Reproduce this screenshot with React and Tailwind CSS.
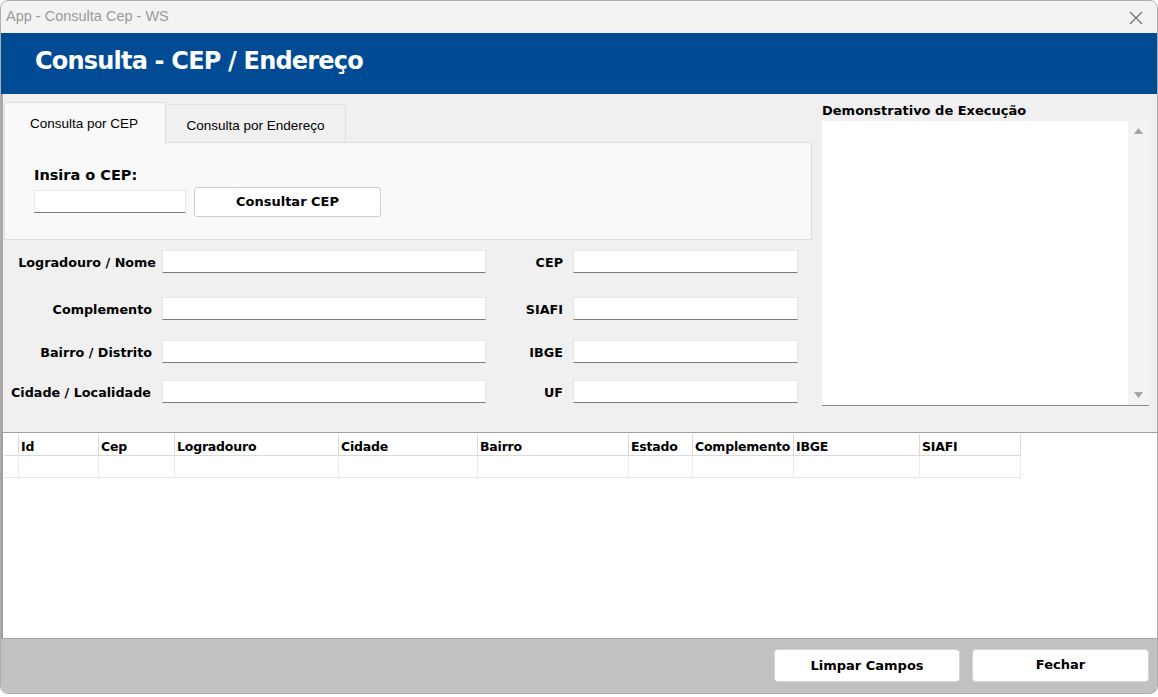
import React from "react";

const bold = "font-['DejaVu_Sans',sans-serif] font-bold";

const Field = ({ className = "" }) => (
  <div className={`h-[23px] bg-white border border-[#e6e6e6] border-b-[#7a7a7a] ${className}`} />
);

const columns = [
  { name: "", w: 15 },
  { name: "Id", w: 80 },
  { name: "Cep", w: 76 },
  { name: "Logradouro", w: 164 },
  { name: "Cidade", w: 139 },
  { name: "Bairro", w: 151 },
  { name: "Estado", w: 64 },
  { name: "Complemento", w: 101 },
  { name: "IBGE", w: 126 },
  { name: "SIAFI", w: 101 },
];

const rows = [
  { left: "Logradouro / Nome", right: "CEP", mt: "mt-[10px]", lp: "pr-[6px]" },
  { left: "Complemento", right: "SIAFI", mt: "mt-[24px]", lp: "pr-[10px]" },
  { left: "Bairro / Distrito", right: "IBGE", mt: "mt-[20px]", lp: "pr-[10px]" },
  { left: "Cidade / Localidade", right: "UF", mt: "mt-[17px]", lp: "pr-[11px]" },
];

export default function App() {
  return (
    <div className="w-[1158px] h-[697px] bg-white">
      <div className="w-[1158px] h-[694px] flex flex-col border border-[#adadad] rounded-lg overflow-hidden bg-[#f0f0f0]">
        {/* Title bar */}
        <div className="h-[32px] shrink-0 bg-[#f3f3f3] flex items-center justify-between pl-[5px] pr-[14px]">
          <span className="font-['Liberation_Sans',sans-serif] text-[14.5px] text-[#9a9a9a]">
            App - Consulta Cep - WS
          </span>
          <svg width="14" height="14" viewBox="0 0 14 14" className="mt-[1px]">
            <path d="M1 1 L13 13 M13 1 L1 13" stroke="#6b6b6b" strokeWidth="1.1" fill="none" />
          </svg>
        </div>

        {/* Blue header */}
        <div className="h-[61px] shrink-0 bg-[#004b93] flex items-center pl-[34px] pb-[5px]">
          <h1 className={`${bold} text-white text-[24px] tracking-[-0.8px]`}>
            Consulta - CEP / Endereço
          </h1>
        </div>

        {/* Main area */}
        <div className="h-[338px] shrink-0 flex border-l-2 border-[#a8a8a8]">
          {/* Left column */}
          <div className="ml-[1px] w-[808px] pt-[8px]">
            {/* Tabs */}
            <div className="flex items-end h-[40px]">
              <div className="w-[162px] h-[41px] -mb-px bg-[#f9f9f9] border border-b-0 border-[#dcdcdc] z-10 flex justify-center pt-[11px] pr-[2px] font-['Liberation_Sans',sans-serif] text-[13.5px] text-black">
                Consulta por CEP
              </div>
              <div className="w-[180px] h-[38px] bg-[#f0f0f0] border border-l-0 border-b-0 border-[#e0e0e0] flex justify-center pt-[11px] font-['Liberation_Sans',sans-serif] text-[13.5px] text-black">
                Consulta por Endereço
              </div>
            </div>
            <div className="h-[98px] bg-[#f9f9f9] border border-[#dcdcdc] pl-[29px] pt-[23px]">
              <div className={`${bold} text-[14.5px] leading-[18px] text-black`}>Insira o CEP:</div>
              <div className="flex items-center mt-[3px]">
                <Field className="w-[152px] -mt-[2px]" />
                <button className={`${bold} ml-[8px] w-[187px] h-[30px] bg-white border border-[#cfcfcf] rounded-[3px] text-[13px] text-black`}>
                  Consultar CEP
                </button>
              </div>
            </div>

            {/* Fields */}
            {rows.map((r) => (
              <div key={r.left} className={`flex items-center ${r.mt}`}>
                <div className={`${bold} w-[158px] text-right text-[12.75px] text-black pt-[2px] ${r.lp}`}>{r.left}</div>
                <Field className="w-[324px]" />
                <div className={`${bold} w-[79px] text-right text-[12.75px] text-black pt-[2px] pr-[2px]`}>{r.right}</div>
                <Field className="ml-[8px] w-[225px]" />
              </div>
            ))}
          </div>

          {/* Right column */}
          <div className="ml-[10px] w-[327px] pt-[9px]">
            <div className={`${bold} text-[13px] leading-[16px] text-black`}>Demonstrativo de Execução</div>
            <div className="mt-[2px] h-[285px] bg-white border-b border-[#8a8a8a] flex justify-end">
              <div className="w-[21px] h-full bg-[#f3f3f3] flex flex-col items-center justify-between py-[7px]">
                <svg width="9" height="6" viewBox="0 0 9 6">
                  <path d="M0 6 L4.5 0 L9 6 Z" fill="#a3a3a3" />
                </svg>
                <svg width="9" height="6" viewBox="0 0 9 6">
                  <path d="M0 0 L9 0 L4.5 6 Z" fill="#a3a3a3" />
                </svg>
              </div>
            </div>
          </div>
        </div>

        {/* Grid */}
        <div className="h-[206px] shrink-0 bg-white border-t border-l-2 border-[#a0a0a0] pt-[1px] pl-px">
          <div className="w-fit">
            <div className="flex h-[22px] border-b border-[#dadada]">
              {columns.map((c, i) => (
                <div
                  key={i}
                  style={{ width: c.w }}
                  className={`${bold} text-[12.5px] tracking-[-0.2px] text-black border-r border-[#dadada] pl-[2px] pt-[5px] leading-[16px] whitespace-nowrap overflow-hidden`}
                >
                  {c.name}
                </div>
              ))}
            </div>
            <div className="flex h-[22px] border-b border-[#e6e6e6]">
              {columns.map((c, i) => (
                <div key={i} style={{ width: c.w }} className="border-r border-[#ececec]" />
              ))}
            </div>
          </div>
        </div>

        {/* Footer */}
        <div className="flex-1 bg-[#c1c1c1] border-t border-[#a8a8a8] flex justify-end items-start pt-[10px] pr-[8px] gap-[12px]">
          <button className={`${bold} w-[186px] h-[33px] bg-white rounded-[4px] border border-[#d6d6d6] text-[13px] text-black`}>
            Limpar Campos
          </button>
          <button className={`${bold} w-[177px] h-[33px] bg-white rounded-[4px] border border-[#d6d6d6] text-[13px] text-black pb-[2px]`}>
            Fechar
          </button>
        </div>
      </div>
    </div>
  );
}
